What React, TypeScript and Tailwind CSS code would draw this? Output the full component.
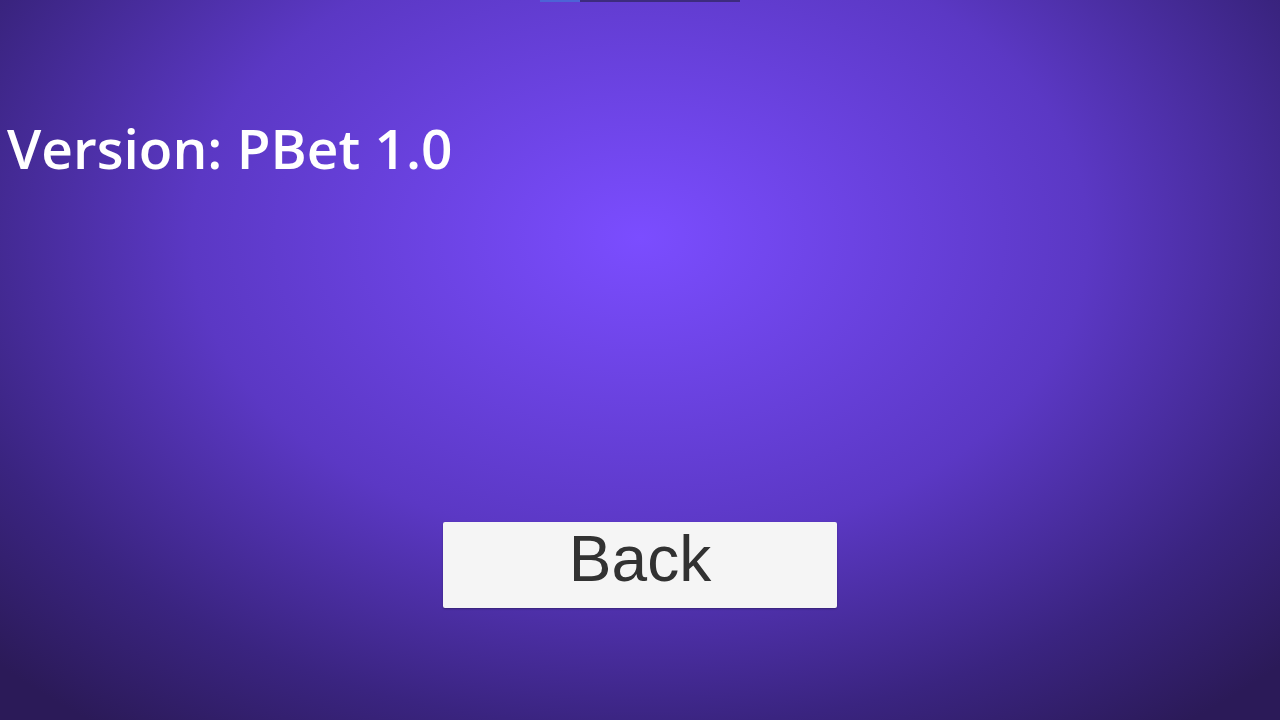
export default function App() {
  return (
    <div className="relative flex h-[720px] w-[1280px] flex-col overflow-hidden bg-[radial-gradient(ellipse_70%_85%_at_50%_33%,#7b4dff_0%,#5b38c4_50%,#3a2480_80%,#2b1a58_100%)]">
      {/* thin strip at the top edge */}
      <div className="flex h-[2px] pl-[540px]">
        <div className="h-full w-[40px] bg-[#4d63d6]" />
        <div className="h-full w-[160px] bg-[#3d2b7e]" />
      </div>
      <div
        className="mt-[106px] pl-[7px] text-[55px] font-semibold leading-[80px] text-white"
        style={{ fontFamily: '"Open Sans", "Noto Sans", sans-serif' }}
      >
        Version: PBet 1.0
      </div>
      <div className="mt-[334px] flex justify-center">
        <button
          className="flex h-[86px] w-[394px] items-center justify-center rounded-[2px] bg-[#f5f5f5] pb-[12px] text-[64px] leading-none text-[#323232] shadow-[0_1px_2px_rgba(0,0,0,0.3)]"
          style={{ fontFamily: '"Liberation Sans", Arial, sans-serif' }}
        >
          Back
        </button>
      </div>
    </div>
  );
}
